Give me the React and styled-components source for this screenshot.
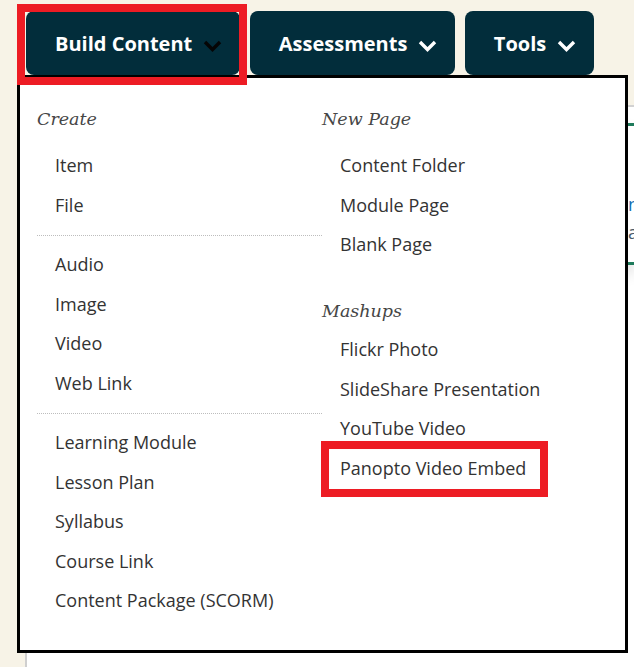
import styled, { createGlobalStyle } from "styled-components";

const GlobalStyle = createGlobalStyle`
  html, body {
    margin: 0;
    padding: 0;
    background: #f7f3e7;
    overflow: hidden;
  }
  *, *::before, *::after { box-sizing: border-box; }
`;

const Page = styled.div`
  position: relative;
  width: 634px;
  height: 667px;
  overflow: hidden;
  font-family: "Open Sans", "Liberation Sans", sans-serif;
`;

const TopBar = styled.div`
  display: flex;
  gap: 10px;
  height: 75px;
  padding: 11px 0 0 26px;
`;

const NavButton = styled.div`
  display: flex;
  align-items: center;
  height: 64px;
  padding: 0 18px 0 29px;
  background: #022d3b;
  border-radius: 8px;
  color: #ffffff;
  font-size: 20px;
  font-weight: 700;
  white-space: nowrap;
`;

const ChevronIcon = styled.svg`
  width: 19px;
  height: 12px;
  margin-left: 10.5px;
  margin-top: 5px;
  color: ${(p) => (p.$dark ? "#050505" : "#ffffff")};
`;

const Chevron = ({ dark }) => (
  <ChevronIcon $dark={dark} viewBox="0 0 19 12">
    <polyline
      points="2,2 9.5,9.5 17,2"
      fill="none"
      stroke="currentColor"
      strokeWidth="3.4"
    />
  </ChevronIcon>
);

const RedFrame = styled.div`
  position: absolute;
  left: 17px;
  top: 4px;
  width: 230px;
  height: 81px;
  border: 8px solid #ed1c24;
  z-index: 3;
`;

const Content = styled.div`
  margin: 30px 0 0 25px;
  height: 600px;
  background: #ffffff;
  border-left: 2px solid #cfcfcf;
  border-top: 2px solid #d2d2d2;
  padding-top: 16px;
`;

const Card = styled.div`
  height: 142px;
  border-top: 3px solid #1e7b5b;
  border-bottom: 3px solid #1e7b5b;
  padding: 64px 0 0 601px;
  box-shadow: 0 8px 14px rgba(0, 0, 0, 0.13);
  font-size: 18px;
  line-height: 28px;
  white-space: nowrap;
`;

const CardLink = styled.div`
  color: #1670b4;
`;

const CardText = styled.div`
  color: #4a5a6a;
`;

const Dropdown = styled.div`
  position: absolute;
  left: 17px;
  top: 75px;
  width: 611px;
  height: 578px;
  background: #ffffff;
  border: 3px solid #000000;
  display: grid;
  grid-template-columns: 285px 1fr;
  padding: 29px 0 0 17px;
  z-index: 2;
`;

const Column = styled.div`
  display: flex;
  flex-direction: column;
`;

const Heading = styled.div`
  font-family: "DejaVu Serif", "Liberation Serif", serif;
  font-style: italic;
  font-size: 17.5px;
  line-height: 24px;
  color: #464646;
  margin-top: ${(p) => p.$top || 0}px;
  margin-bottom: ${(p) => p.$bottom || 0}px;
`;

const Item = styled.div`
  position: relative;
  font-size: 18px;
  line-height: 39.5px;
  height: 39.5px;
  padding-left: 18px;
  color: #333333;
  white-space: nowrap;

  ${(p) =>
    p.$highlight &&
    `
    &::after {
      content: "";
      position: absolute;
      left: -1px;
      top: -8px;
      width: 227px;
      bottom: -9px;
      border: 8px solid #ed1c24;
    }
  `}
`;

const Divider = styled.div`
  border-top: 1px dotted #bdbdbd;
  margin: 9.5px 0;
`;

const createGroups = [
  ["Item", "File"],
  ["Audio", "Image", "Video", "Web Link"],
  ["Learning Module", "Lesson Plan", "Syllabus", "Course Link", "Content Package (SCORM)"],
];

const newPage = ["Content Folder", "Module Page", "Blank Page"];
const mashups = ["Flickr Photo", "SlideShare Presentation", "YouTube Video"];

export default function App() {
  return (
    <Page>
      <GlobalStyle />
      <TopBar>
        <NavButton>
          Build Content
          <Chevron dark />
        </NavButton>
        <NavButton>
          Assessments
          <Chevron />
        </NavButton>
        <NavButton>
          Tools
          <Chevron />
        </NavButton>
      </TopBar>
      <RedFrame />
      <Content>
        <Card>
          <CardLink>nclude</CardLink>
          <CardText>about</CardText>
        </Card>
      </Content>
      <Dropdown>
        <Column>
          <Heading $bottom={15.3}>Create</Heading>
          {createGroups.map((group, gi) => (
            <div key={gi}>
              {gi > 0 && <Divider />}
              {group.map((name) => (
                <Item key={name}>{name}</Item>
              ))}
            </div>
          ))}
        </Column>
        <Column>
          <Heading $bottom={15.3}>New Page</Heading>
          {newPage.map((name) => (
            <Item key={name}>{name}</Item>
          ))}
          <Heading $top={34.2} $bottom={7.3}>Mashups</Heading>
          {mashups.map((name) => (
            <Item key={name}>{name}</Item>
          ))}
          <Item $highlight>Panopto Video Embed</Item>
        </Column>
      </Dropdown>
    </Page>
  );
}
